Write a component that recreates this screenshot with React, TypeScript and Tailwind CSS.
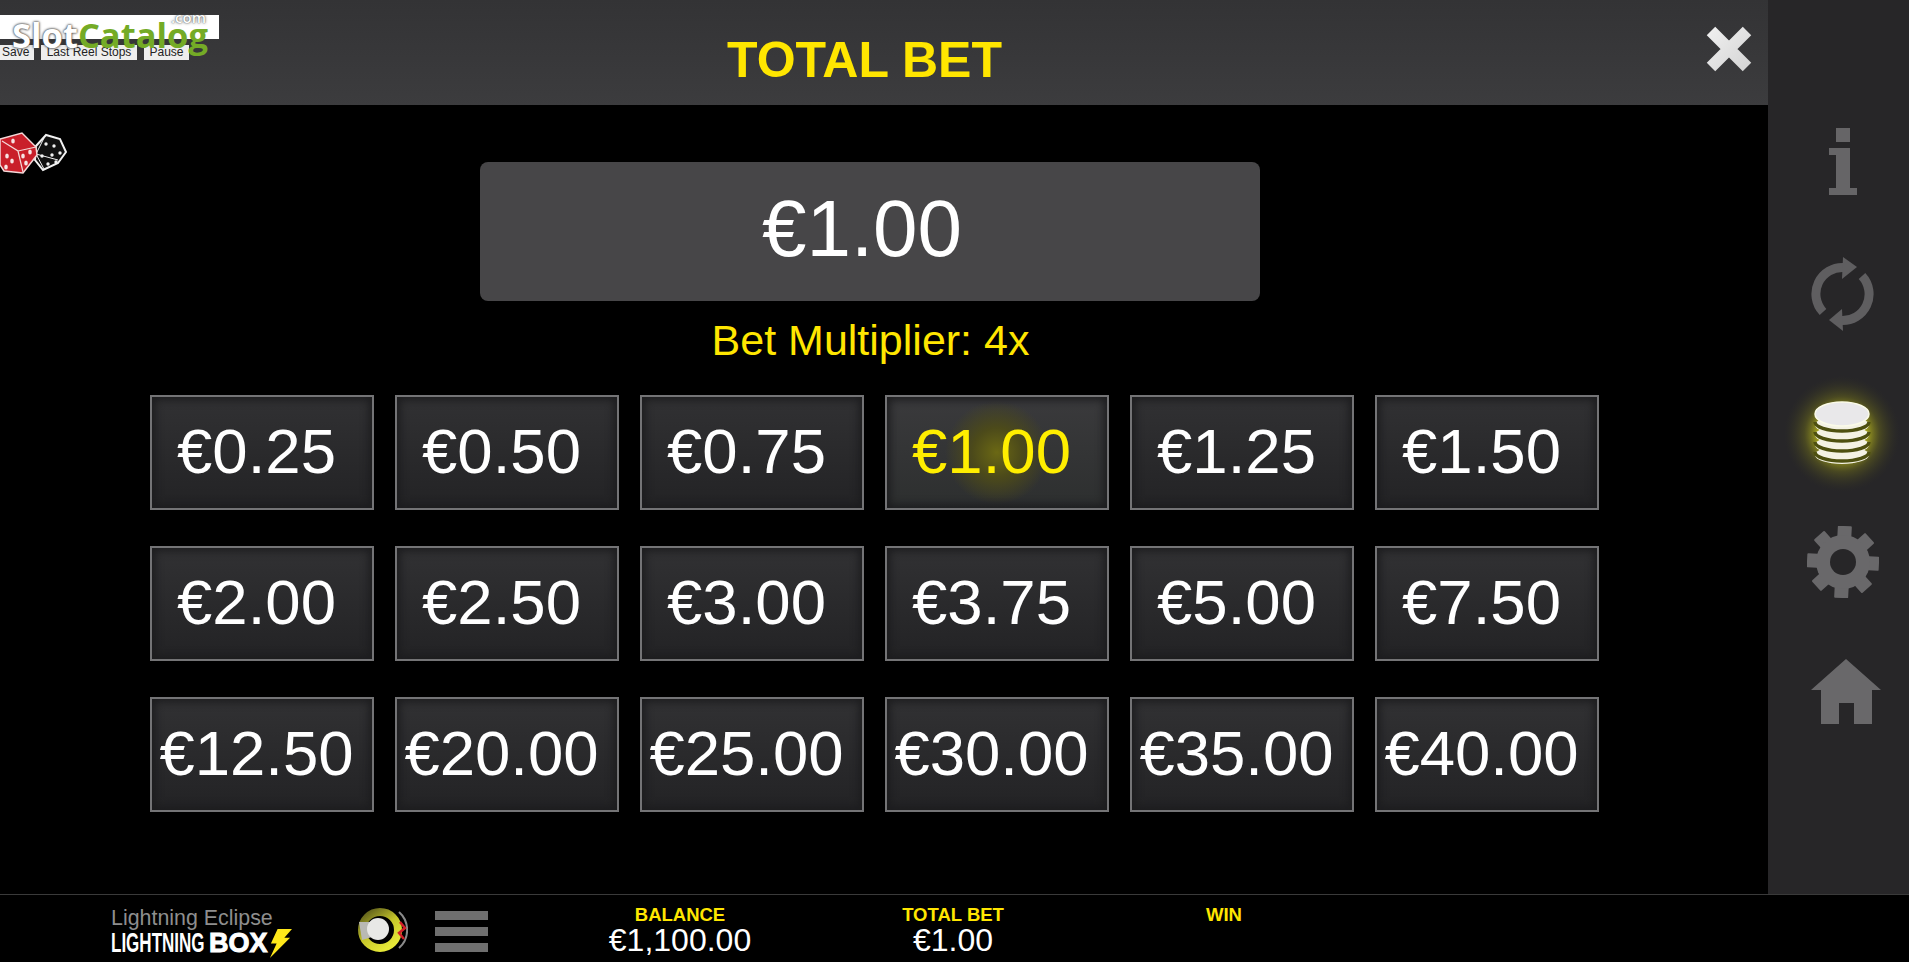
import React from 'react';

const bets = [
  '€0.25', '€0.50', '€0.75', '€1.00', '€1.25', '€1.50',
  '€2.00', '€2.50', '€3.00', '€3.75', '€5.00', '€7.50',
  '€12.50', '€20.00', '€25.00', '€30.00', '€35.00', '€40.00',
];

const stats = [
  { label: 'BALANCE', value: '€1,100.00', margin: 'ml-[92px]' },
  { label: 'TOTAL BET', value: '€1.00', margin: 'ml-[73px]' },
  { label: 'WIN', value: '', margin: 'ml-[71px]' },
];

const CloseIcon = () => (
  <svg width="48" height="48" viewBox="0 0 48 48">
    <defs>
      <linearGradient id="closeFill" gradientUnits="userSpaceOnUse" x1="0" y1="0" x2="48" y2="48">
        <stop offset="0" stopColor="#f2f2f2" />
        <stop offset="1" stopColor="#d2d2d2" />
      </linearGradient>
    </defs>
    <path d="M6 6 L42 42 M42 6 L6 42" stroke="url(#closeFill)" strokeWidth="12" fill="none" />
  </svg>
);

const InfoIcon = () => (
  <svg width="28" height="67" viewBox="0 0 28 67">
    <path d="M7 0 H21 V14 H7 Z" fill="#666567" />
    <path d="M0 20 H21 V60 H28 V67 H0 V60 H7 V27 H0 Z" fill="#666567" />
  </svg>
);

const RefreshIcon = () => (
  <svg width="63" height="74" viewBox="0 0 63 74">
    <path d="M12 55 A26.5 26.5 0 0 1 33 10.5" stroke="#5f5e60" strokeWidth="9" fill="none" />
    <path d="M32 0 L46 10 L31 22 Z" fill="#5f5e60" />
    <path d="M51 19 A26.5 26.5 0 0 1 30 63.5" stroke="#5f5e60" strokeWidth="9" fill="none" />
    <path d="M31 52 L18 63 L32 74 Z" fill="#5f5e60" />
  </svg>
);

const CoinsIcon = () => (
  <svg width="116" height="116" viewBox="0 0 116 116">
    <defs>
      <radialGradient id="coinGlow">
        <stop offset="0.38" stopColor="#c9c820" stopOpacity="0.9" />
        <stop offset="0.65" stopColor="#7d7c18" stopOpacity="0.4" />
        <stop offset="1" stopColor="#3a3a20" stopOpacity="0" />
      </radialGradient>
    </defs>
    <ellipse cx="58" cy="58" rx="58" ry="58" fill="url(#coinGlow)" />
    {[79, 69, 59, 49].map((cy) => (
      <g key={cy}>
        <ellipse cx="58" cy={cy} rx="27" ry="9" fill="#f4f2e4" />
        <path d={`M31 ${cy - 3} A27 9 0 0 0 85 ${cy - 3}`} stroke="#4e5010" strokeWidth="3.5" fill="none" />
      </g>
    ))}
    <ellipse cx="58" cy="38" rx="27" ry="12" fill="#e9e8ea" stroke="#fbfbe8" strokeWidth="1.5" />
  </svg>
);

const GearIcon = () => (
  <svg width="72" height="72" viewBox="-36 -36 72 72">
    {[0, 45, 90, 135, 180, 225, 270, 315].map((deg) => (
      <rect key={deg} x="-7" y="-36" width="14" height="16" rx="1" fill="#69686a" transform={`rotate(${deg + 3})`} />
    ))}
    <circle r="27" fill="#69686a" />
    <circle r="13" fill="#272628" />
  </svg>
);

const HomeIcon = () => (
  <svg width="70" height="65" viewBox="0 0 70 65">
    <path d="M35 0 L70 31 H61 V65 H43 V44 H28 V65 H10 V31 H0 Z" fill="#69686a" />
  </svg>
);

const Dice = () => (
  <svg width="67" height="42" viewBox="0 0 67 42">
    <path d="M36 14 L46 3 L60 7 L66 20 L58 31 L43 38 L35 28 Z" fill="#111" stroke="#f2f2f2" strokeWidth="2" />
    <path d="M44 6 L36 22 M36 22 L44 37 M36 22 L58 28" stroke="#f2f2f2" strokeWidth="1" />
    {[[46, 12], [54, 14], [42, 24], [52, 23], [60, 21], [48, 32], [56, 30]].map(([cx, cy]) => (
      <circle key={`${cx}-${cy}`} cx={cx} cy={cy} r="1.7" fill="#f2f2f2" />
    ))}
    <path d="M0 7 L22 1 L36 15 L37 23 L23 41 L4 39 L0 33 Z" fill="#c91f2a" stroke="#f4d8d8" strokeWidth="1.5" />
    <path d="M2 9 L18 19 L23 40 M18 19 L36 15" stroke="#f4d8d8" strokeWidth="1.2" fill="none" />
    {[[13, 9], [7, 24], [12, 29], [6, 35], [23, 24], [30, 20], [26, 31]].map(([cx, cy]) => (
      <ellipse key={`${cx}-${cy}`} cx={cx} cy={cy} rx="1.8" ry="2.6" fill="#f7e4e4" />
    ))}
  </svg>
);

const Spinner = () => (
  <svg width="50" height="46" viewBox="0 0 50 46">
    <defs>
      <linearGradient id="ringFill" x1="0" y1="0" x2="0.7" y2="1">
        <stop offset="0" stopColor="#56561a" />
        <stop offset="0.55" stopColor="#c6c62a" />
        <stop offset="1" stopColor="#e6e838" />
      </linearGradient>
    </defs>
    <circle cx="22" cy="23" r="18" stroke="url(#ringFill)" strokeWidth="8" fill="#000" />
    <path d="M1 15 H14 V30 L4 33 Z" fill="#b9b9b4" />
    <circle cx="20" cy="22" r="11" fill="#e8e8e6" />
    <path d="M41 5 A24 24 0 0 1 41 41" stroke="#8a8a8a" strokeWidth="2" fill="none" />
    <path d="M42 15 L47 21 L41 26 L46 32" stroke="#d3202a" strokeWidth="2.5" fill="none" />
  </svg>
);

const Bolt = () => (
  <svg width="24" height="29" viewBox="0 0 25 30">
    <path d="M10 0 H25 L17 9 H23 L2 30 L9 15 H3 Z" fill="#ffe81a" />
  </svg>
);

const BetButton = ({ value, active }: { value: string; active: boolean }) => (
  <button
    className={`h-[115px] w-[224px] border-2 border-[#747476] pr-[11px] pb-[2px] text-[63.5px] leading-none shadow-[inset_0_0_8px_3px_#1c1c1e] ${
      active
        ? 'bg-[radial-gradient(circle_at_50%_50%,#6b6814_0%,#4c4a1a_20%,transparent_42%),linear-gradient(#3a3a3c,#2d2f2f)] text-[#ffee00]'
        : 'bg-gradient-to-b from-[#313133] to-[#232325] text-white'
    }`}
  >
    {value}
  </button>
);

export default function App() {
  return (
    <div className="relative flex h-[962px] w-[1909px] flex-col overflow-hidden bg-black font-['Liberation_Sans',Arial,sans-serif]">
      <div className="flex h-[894px]">
        {/* Bet panel */}
        <div className="w-[1768px]">
          <div className="flex h-[105px] items-center justify-between bg-gradient-to-b from-[#333335] to-[#3c3c3e]">
            <h1 className="mt-[14px] ml-[727px] text-[50px] leading-none font-bold text-[#ffe600]">TOTAL BET</h1>
            <div className="mr-[15px] mb-[8px]">
              <CloseIcon />
            </div>
          </div>

          <div className="mt-[57px] ml-[480px] flex h-[139px] w-[780px] items-center justify-center rounded-lg bg-[#474648] pr-[16px] pb-[6px] text-[80px] leading-none text-white">
            €1.00
          </div>
          <div className="mt-[15px] mr-[27px] text-center text-[43px] leading-[48px] text-[#ffe600]">Bet Multiplier: 4x</div>

          <div className="mt-[31px] ml-[150px] grid w-fit grid-cols-[repeat(6,224px)] gap-x-[21px] gap-y-[36px]">
            {bets.map((bet) => (
              <BetButton key={bet} value={bet} active={bet === '€1.00'} />
            ))}
          </div>
        </div>

        {/* Side menu */}
        <div className="flex w-[141px] flex-col items-start bg-[#272628]">
          <div className="mt-[128px] ml-[61px]">
            <InfoIcon />
          </div>
          <div className="mt-[62px] ml-[43px]">
            <RefreshIcon />
          </div>
          <div className="mt-[45px] ml-[16px]">
            <CoinsIcon />
          </div>
          <div className="mt-[34px] ml-[39px]">
            <GearIcon />
          </div>
          <div className="mt-[61px] ml-[43px]">
            <HomeIcon />
          </div>
        </div>
      </div>

      {/* Footer */}
      <div className="flex h-[68px] border-t border-[#3a3a3a] bg-black">
        <div className="ml-[111px] w-[200px] pt-[12px]">
          <div className="text-[21.4px] leading-[22px] text-[#8e8e8e]">Lightning Eclipse</div>
          <div className="flex h-[29px] items-center text-white">
            <span className="inline-block w-[98px] origin-left scale-x-[0.63] text-[27px] leading-none font-bold whitespace-nowrap">LIGHTNING</span>
            <span className="text-[27px] leading-none font-bold [-webkit-text-stroke:1px_white]">BOX</span>
            <Bolt />
          </div>
        </div>
        <div className="mt-[12px] ml-[47px] h-[46px]">
          <Spinner />
        </div>
        <div className="mt-[16px] ml-[27px] flex h-[41px] w-[53px] flex-col justify-between">
          <div className="h-[9px] bg-[#6f6f6f]" />
          <div className="h-[9px] bg-[#6f6f6f]" />
          <div className="h-[9px] bg-[#6f6f6f]" />
        </div>
        {stats.map((stat) => (
          <div key={stat.label} className={`${stat.margin} w-[200px] pt-[10px] text-center`}>
            <div className="text-[18.5px] leading-[20px] font-bold text-[#ffe600]">{stat.label}</div>
            <div className="text-[32px] leading-[30px] text-white">{stat.value}</div>
          </div>
        ))}
      </div>

      {/* Recorder overlay */}
      <div className="absolute top-[15px] left-0 h-[24px] w-[219px] bg-white" />
      <div className="absolute top-[45px] left-0 flex gap-[7px] text-[12px] leading-[15px] text-[#222]">
        <span className="w-[34px] bg-[#eeeeee] pl-[2px]">Save</span>
        <span className="w-[96px] bg-[#eeeeee] text-center">Last Reel Stops</span>
        <span className="w-[45px] bg-[#eeeeee] text-center">Pause</span>
      </div>
      <div className="absolute top-[20px] left-[12px] flex font-['Open_Sans',sans-serif] text-[34.5px] leading-[30px] font-bold">
        <span className="text-white [text-shadow:0_0_3px_#444,0_0_2px_#444]">Slot</span>
        <span className="text-[#74ab26]">Catalog</span>
      </div>
      <div className="absolute top-[9px] left-[171px] font-['Open_Sans',sans-serif] text-[15px] leading-[16px] font-semibold text-white [text-shadow:0_0_3px_#555,0_0_1px_#555]">.com</div>
      <div className="absolute top-[132px] left-0">
        <Dice />
      </div>
    </div>
  );
}
